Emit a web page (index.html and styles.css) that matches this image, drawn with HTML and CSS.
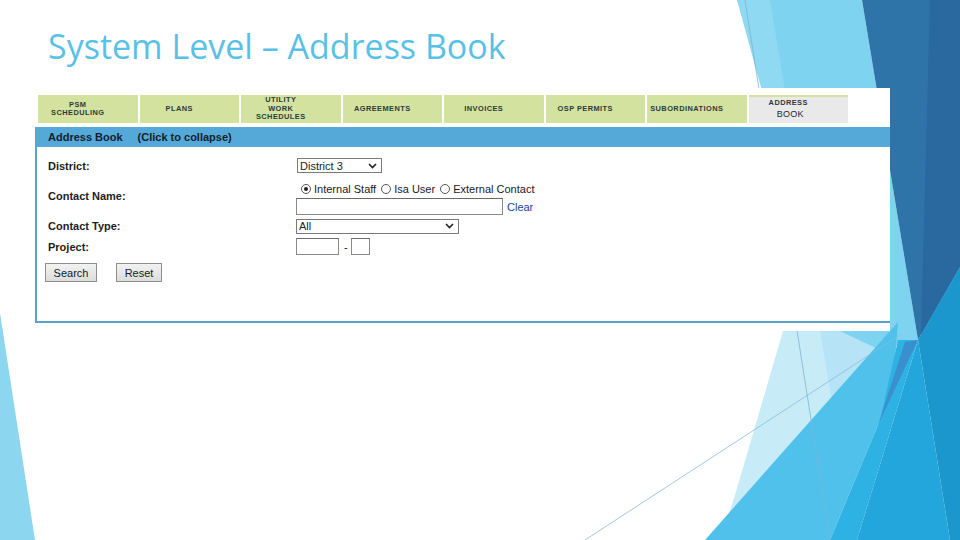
FILE: index.html
```html
<!DOCTYPE html>
<html>
<head>
<meta charset="utf-8">
<link rel="stylesheet" href="styles.css">
</head>
<body>
<div class="slide">
  <svg class="bg" width="960" height="540" viewBox="0 0 960 540">
    <polygon points="0,313 35,540 0,540" fill="#8dd6f0"/>
    <polygon points="783,331 735,495 720,540 830,540 900,330" fill="#c8ebf8"/>
    <polygon points="820,331 900,330 860,420 835,420" fill="#b6e4f6"/>
    <polygon points="737,0 862,0 918,340 880,350 840,331" fill="#7dd3f0"/>
    <polygon points="737,0 770,0 790,120 770,120" fill="#8fd9f2"/>
    <polygon points="862,0 960,0 960,267 918,340" fill="#2f74a9"/>
    <polygon points="930,0 960,0 960,267 921,335" fill="#2a68a0"/>
    <polygon points="705,540 898,322 895,360 880,420 830,540" fill="#50c1ea"/>
    <polygon points="830,540 880,420 898,340 918,340 857,540" fill="#2eb1e3"/>
    <polygon points="878,425 905,342 918,340" fill="#3a90cf"/>
    <polygon points="918,340 857,540 950,540" fill="#22a6dc"/>
    <polygon points="918,340 960,267 960,540 950,540" fill="#1b97cd"/>
    <line x1="745" y1="0" x2="830" y2="540" stroke="#7ab6d4" stroke-width="0.8"/>
    <line x1="585" y1="540" x2="900" y2="335" stroke="#86bdd8" stroke-width="0.8"/>
  </svg>

  <h1 class="title">System Level – Address Book</h1>

  <div class="shot">
    <div class="tabs">
      <div class="tab"><span>PSM<br>SCHEDULING</span></div>
      <div class="tab"><span>PLANS</span></div>
      <div class="tab"><span>UTILITY<br>WORK<br>SCHEDULES</span></div>
      <div class="tab"><span>AGREEMENTS</span></div>
      <div class="tab"><span>INVOICES</span></div>
      <div class="tab"><span>OSP PERMITS</span></div>
      <div class="tab"><span>SUBORDINATIONS</span></div>
      <div class="tab active"><span>ADDRESS<br><b class="big">BOOK</b></span></div>
    </div>

    <div class="bar">
      <span class="bar-title">Address Book</span>
      <span class="bar-hint">(Click to collapse)</span>
    </div>

    <div class="panel">
      <div class="form">
        <div class="label">District:</div>
        <div class="field">
          <div class="select sel-district"><span>District 3</span>
            <svg class="chev" width="9" height="6" viewBox="0 0 9 6"><polyline points="1,1 4.5,4.5 8,1" fill="none" stroke="#222" stroke-width="1.6"/></svg>
          </div>
        </div>

        <div class="label">Contact Name:</div>
        <div class="field col">
          <div class="radios">
            <span class="radio checked"></span><span class="rlabel">Internal Staff</span>
            <span class="radio"></span><span class="rlabel">Isa User</span>
            <span class="radio"></span><span class="rlabel">External Contact</span>
          </div>
          <div class="namerow">
            <span class="input name"></span>
            <span class="clear">Clear</span>
          </div>
        </div>

        <div class="label">Contact Type:</div>
        <div class="field">
          <div class="select sel-type"><span>All</span>
            <svg class="chev" width="9" height="6" viewBox="0 0 9 6"><polyline points="1,1 4.5,4.5 8,1" fill="none" stroke="#222" stroke-width="1.6"/></svg>
          </div>
        </div>

        <div class="label">Project:</div>
        <div class="field">
          <span class="input proj1"></span>
          <span class="dash">-</span>
          <span class="input proj2"></span>
        </div>
      </div>

      <div class="buttons">
        <span class="btn search">Search</span>
        <span class="btn reset">Reset</span>
      </div>
    </div>
  </div>
</div>
</body>
</html>
```

FILE: styles.css
```css
html, body {
  margin: 0;
  padding: 0;
  background: #ffffff;
}

.slide {
  position: relative;
  width: 960px;
  height: 540px;
  overflow: hidden;
  background: #ffffff;
  font-family: "Liberation Sans", Arial, sans-serif;
}

.bg {
  position: absolute;
  left: 0;
  top: 0;
}

.title {
  position: relative;
  margin: 0;
  padding: 28px 0 0 48px;
  height: 61px;
  box-sizing: border-box;
  font-family: "Open Sans", "DejaVu Sans", sans-serif;
  font-weight: 400;
  font-size: 34px;
  line-height: 36px;
  color: #58c1e7;
}

.shot {
  position: relative;
  margin: 27px 0 0 35px;
  width: 855px;
  height: 243px;
  background: #ffffff;
}

/* tabs */
.tabs {
  display: flex;
  gap: 2px;
  padding: 7px 0 0 3px;
  height: 28px;
}

.tab {
  width: 99.5px;
  height: 28px;
  background: #d3e39f;
  display: flex;
  align-items: center;
  justify-content: center;
  padding-right: 20px;
  box-sizing: border-box;
  text-align: center;
  font-size: 7.4px;
  line-height: 8.5px;
  font-weight: 700;
  letter-spacing: 0.45px;
  color: #2d3a3a;
}

.tab.active {
  background: #e9e9e9;
  border-top: 2px solid #d3e39f;
  align-items: flex-start;
  padding-top: 2px;
}

.tab .big {
  display: inline-block;
  font-size: 9px;
  line-height: 12px;
  font-weight: 400;
  letter-spacing: 0.2px;
  color: #1c2a44;
  margin-left: 4px;
}

/* header bar */
.bar {
  margin-top: 4px;
  height: 20px;
  background: #54a9d8;
  display: flex;
  align-items: center;
  padding-left: 13px;
  font-size: 11px;
  font-weight: 700;
  color: #15202e;
}

.bar-hint {
  margin-left: 15px;
}

/* panel */
.panel {
  border-left: 2px solid #5aa2cb;
  border-bottom: 2px solid #5a9fc7;
  height: 176px;
  box-sizing: border-box;
  padding: 9px 0 0 11px;
}

.form {
  display: grid;
  grid-template-columns: 248px auto;
  grid-template-rows: 19px 41px 20px 21px;
  font-size: 11px;
  color: #1a1a1a;
}

.label {
  display: flex;
  align-items: center;
  font-weight: 700;
  color: #1d1d22;
}

.field {
  display: flex;
  align-items: center;
}

.field.col {
  flex-direction: column;
  align-items: flex-start;
  justify-content: flex-start;
}

.select {
  height: 15px;
  box-sizing: border-box;
  border: 1px solid #7a7a7a;
  background: #ffffff;
  display: flex;
  align-items: center;
  justify-content: space-between;
  padding: 0 4px 0 2px;
  font-size: 11px;
  color: #222;
}

.sel-district {
  width: 85px;
  margin-left: 1px;
}

.sel-type {
  width: 163px;
}

.radios {
  display: flex;
  align-items: center;
  height: 14px;
  margin-top: 7px;
  margin-left: 5px;
}

.radio {
  width: 10px;
  height: 10px;
  box-sizing: border-box;
  border: 1px solid #555;
  border-radius: 50%;
  background: #fff;
  position: relative;
  margin-right: 3px;
}

.radio.checked::after {
  content: "";
  position: absolute;
  left: 2px;
  top: 2px;
  width: 4px;
  height: 4px;
  border-radius: 50%;
  background: #222;
}

.rlabel {
  margin-right: 5px;
  color: #1a1a1a;
}

.namerow {
  display: flex;
  align-items: center;
  margin-top: 2px;
}

.input {
  display: inline-block;
  height: 17px;
  box-sizing: border-box;
  border: 1px solid #8a8a8a;
  border-top-color: #6a6a6a;
  background: #fff;
}

.name {
  width: 207px;
}

.clear {
  margin-left: 4px;
  color: #233f96;
}

.proj1 {
  width: 43px;
}

.dash {
  margin: 0 3px 0 5px;
}

.proj2 {
  width: 19px;
}

.buttons {
  display: flex;
  gap: 19px;
  margin: 6px 0 0 -3px;
}

.btn {
  height: 19px;
  box-sizing: border-box;
  border: 1px solid #8e8e8e;
  background: linear-gradient(#f2f2f2, #dcdcdc);
  display: flex;
  align-items: center;
  justify-content: center;
  font-size: 11px;
  color: #1a1a1a;
}

.search {
  width: 52px;
}

.reset {
  width: 46px;
}
```
